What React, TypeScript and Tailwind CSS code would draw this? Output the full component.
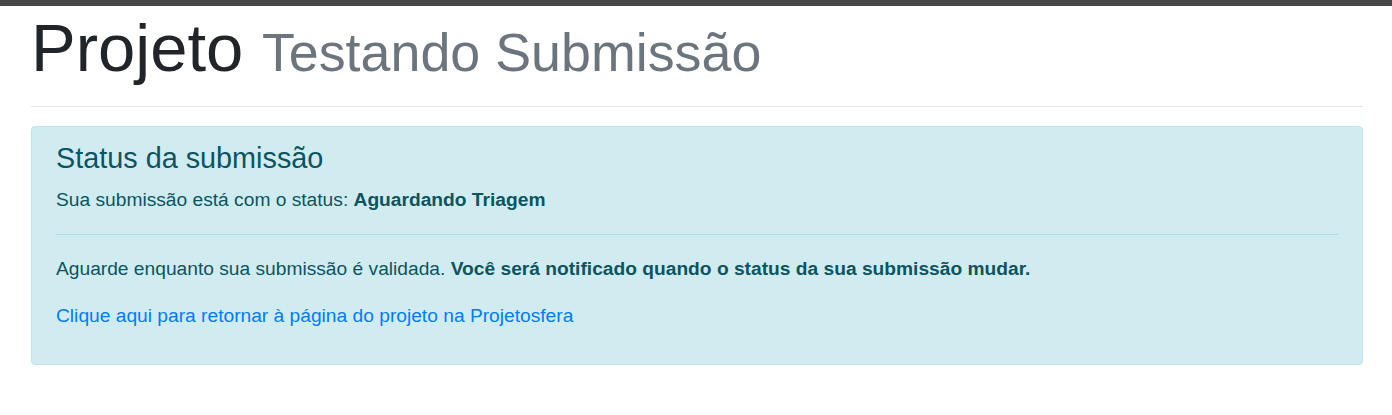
export default function App() {
  return (
    <div className="min-h-screen bg-white" style={{ fontFamily: '"Liberation Sans", Arial, sans-serif' }}>
      {/* top bar */}
      <div className="h-[6px] bg-[#474747]" />

      <div className="pl-[31px] pr-[29px]">
        <h1 className="mt-[2px] text-[67px] leading-[1.2] text-[#212529]">
          Projeto <small className="text-[53.8px] text-[#6c757d]">Testando Submissão</small>
        </h1>

        <hr className="mt-[18px] border-0 border-t border-[#e5e5e5]" />

        <div className="mt-[19px] rounded-[4px] border border-[#bee5eb] bg-[#d1ecf1] pb-[33px] pl-[24px] pr-[24px] pt-[14px] text-[#0c5460]">
          <h4 className="text-[28.8px] leading-[1.2]">Status da submissão</h4>
          <p className="mt-[10.3px] text-[19.2px] leading-[1.5]">
            Sua submissão está com o status: <strong className="font-bold">Aguardando Triagem</strong>
          </p>
          <hr className="mt-[19.3px] border-0 border-t border-[#abdde5]" />
          <p className="mt-[19.9px] text-[19.2px] leading-[1.5]">
            Aguarde enquanto sua submissão é validada.{' '}
            <strong className="font-bold">Você será notificado quando o status da sua submissão mudar.</strong>
          </p>
          <p className="mt-[18.2px] text-[19.2px] leading-[1.5]">
            <a href="#" className="text-[#007bff]">
              Clique aqui para retornar à página do projeto na Projetosfera
            </a>
          </p>
        </div>
      </div>
    </div>
  );
}
